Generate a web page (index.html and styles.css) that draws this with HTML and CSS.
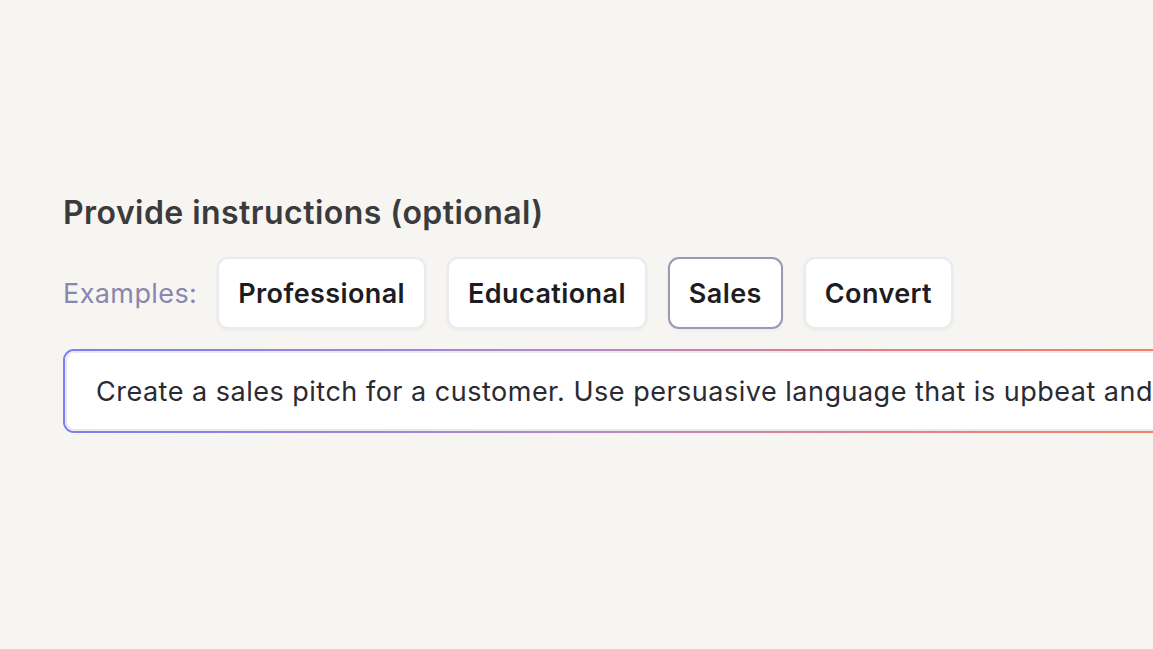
FILE: index.html
```html
<!DOCTYPE html>
<html>
<head>
<meta charset="utf-8">
<link rel="stylesheet" href="styles.css">
</head>
<body>
<main class="panel">
  <h2 class="title">Provide instructions (optional)</h2>
  <div class="examples">
    <span class="label">Examples:</span>
    <button class="chip">Professional</button>
    <button class="chip">Educational</button>
    <button class="chip active">Sales</button>
    <button class="chip">Convert</button>
  </div>
  <div class="field"><span class="field-text">Create a sales pitch for a customer. Use persuasive language that is upbeat and</span></div>
</main>
</body>
</html>
```
FILE: styles.css
```css
html, body {
  margin: 0;
  padding: 0;
  background: #f6f5f2;
  overflow: hidden;
  width: 1153px;
  height: 649px;
}
body {
  font-family: Inter, "Noto Sans", sans-serif;
}
.panel {
  padding: 192px 0 0 63px;
  display: flex;
  flex-direction: column;
}
.title {
  margin: 0;
  font-size: 32px;
  font-weight: 600;
  letter-spacing: 0.45px;
  line-height: 42px;
  color: #3b3a3d;
}
.examples {
  margin-top: 23px;
  display: flex;
  align-items: center;
  gap: 21px;
}
.label {
  font-size: 27px;
  letter-spacing: 0.4px;
  color: #8b86ad;
  margin-right: -1px;
}
.chip {
  font-family: inherit;
  font-size: 27px;
  font-weight: 600;
  letter-spacing: 0.4px;
  color: #1d1c22;
  background: #fff;
  border: 2px solid #ebeaf0;
  border-radius: 11px;
  height: 72px;
  padding: 0 19px;
  box-shadow: 0 1px 3px rgba(40, 30, 60, 0.06);
}
.chip.active {
  border-color: #9c99b2;
}
.field {
  margin-top: 20px;
  width: 1120px;
  height: 84px;
  box-sizing: border-box;
  border: 2px solid transparent;
  border-radius: 11px;
  background:
    linear-gradient(#fff, #fff) padding-box,
    linear-gradient(90deg, #7b7ef6 0%, #b08ac8 45%, #e67d8a 75%, #f6815b 100%) border-box;
  box-shadow: inset 0 0 0 2px #ebe9ef;
  display: flex;
  align-items: center;
  padding-left: 31px;
  font-size: 27px;
  letter-spacing: 0.5px;
  color: #2a2a33;
  white-space: nowrap;
}
```
